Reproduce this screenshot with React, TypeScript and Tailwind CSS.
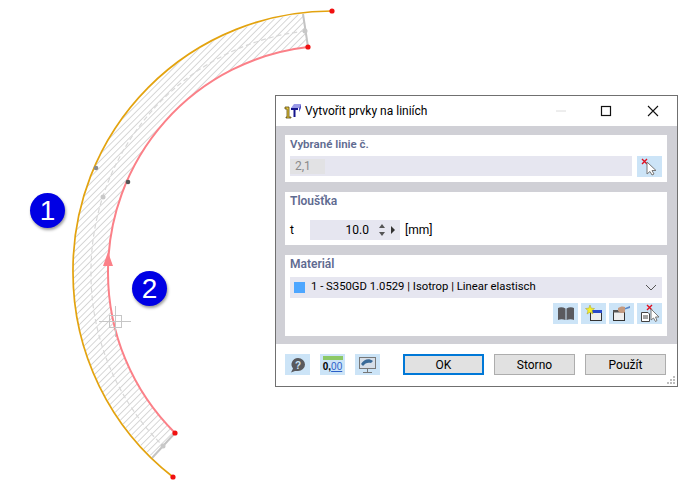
import React from "react";

const outerTop = "M332 11A259 259 0 0 0 73 272";
const outerBottom = "A259 259 0 0 0 173 477";
const inner = "M308 47A226 226 0 0 0 108 272A226 226 0 0 0 175 433";
const hatchArea =
  "M303 14A258.5 258.5 0 0 0 73 272A259 259 0 0 0 152 457L175 433A226 226 0 0 1 108 272A226 226 0 0 1 308 47Z";

function Curves() {
  return (
    <svg className="absolute inset-0" width={699} height={497} viewBox="0 0 699 497">
      <defs>
        <pattern id="hatch" width="4.6" height="4.6" patternUnits="userSpaceOnUse" patternTransform="rotate(45)">
          <line x1="0" y1="0" x2="0" y2="4.6" stroke="#9c9c9c" strokeWidth="0.8" />
        </pattern>
      </defs>
      <path d={hatchArea} fill="url(#hatch)" />
      <path d="M305 31A242 242 0 0 0 91 272A242 242 0 0 0 163 446" fill="none" stroke="#d8d8d8" strokeWidth="1.2" strokeDasharray="5 3" />
      <line x1="303" y1="14" x2="308" y2="47" stroke="#c4c4c4" strokeWidth="2" />
      <line x1="152" y1="458" x2="175" y2="433" stroke="#c4c4c4" strokeWidth="2" />
      <circle cx="305" cy="31" r="2.5" fill="#c8c8c8" />
      <circle cx="163" cy="446" r="2.5" fill="#c8c8c8" />
      <circle cx="103" cy="197" r="2.5" fill="#c8c8c8" />
      <path d={outerTop + outerBottom} fill="none" stroke="#e3a30f" strokeWidth="1.7" />
      <path d={inner} fill="none" stroke="#fb8088" strokeWidth="2" />
      <path d="M108 252L103 266L113 266Z" fill="#fb8088" />
      <circle cx="96" cy="168" r="2.3" fill="#8c8c8c" />
      <circle cx="128" cy="182" r="2.3" fill="#555" />
      <circle cx="332" cy="11" r="2.6" fill="#f01010" />
      <circle cx="308" cy="47" r="2.6" fill="#f01010" />
      <circle cx="175" cy="433" r="2.6" fill="#f01010" />
      <circle cx="173" cy="477" r="2.6" fill="#f01010" />
      <g stroke="#c6c6c6" strokeWidth="1" fill="none">
        <rect x="109.5" y="315.5" width="12" height="12" />
        <path d="M99 321.5H131M115.5 306V337" />
      </g>
    </svg>
  );
}

function Badge({ n, className }: { n: string; className: string }) {
  return (
    <div className={`absolute w-[35px] h-[35px] rounded-full bg-[#0000e4] text-white flex items-center justify-center text-[28px] font-['Liberation_Sans',sans-serif] shadow-[1px_2px_3px_rgba(0,0,0,0.4)] ${className}`}>
      {n}
    </div>
  );
}

function Tile({ children, className = "" }: { children: React.ReactNode; className?: string }) {
  return <div className={`w-[25px] h-[21px] bg-[#cce4f7] flex items-center justify-center ${className}`}>{children}</div>;
}

const Pick = () => (
  <svg width="21" height="19" viewBox="0 0 21 19">
    <path d="M3 2L8 7M8 2L3 7" stroke="#e01020" strokeWidth="1.4" />
    <path d="M8 5V17L11 14.5L13 18L15 17L13 13.5H17Z" fill="#fff" stroke="#777" strokeWidth="1" />
  </svg>
);

const Sel = "font-semibold text-[#5f6b91] leading-[16px]";
const Btn = "w-[81px] h-[21px] flex items-center justify-center text-[12px] bg-[#e1e1e1] text-black";

export default function App() {
  return (
    <div className="relative w-[699px] h-[497px] bg-white overflow-hidden font-['Roboto',sans-serif]">
      <Curves />
      <Badge n="1" className="left-[30px] top-[193px]" />
      <Badge n="2" className="left-[132px] top-[271px]" />

      <div className="absolute left-[275px] top-[95px] w-[403px] h-[292px] border border-[#707070] bg-white flex flex-col">
        <div className="h-[30px] flex items-center shrink-0">
          <svg width="18" height="16" viewBox="0 0 18 16" className="ml-[8px]">
            <path d="M1 4H5V14H7V15H2V14H3V6H1Z" fill="#e8c83c" stroke="#5a4a10" strokeWidth="0.8" />
            <path d="M7 5H15L17 1H10L7 5Z" fill="#9a9ae8" />
            <path d="M15 5L17 1V5L15 9Z" fill="#5050c0" />
            <path d="M7 5H14V7H11.5V14H9.5V7H7Z" fill="#14148c" />
          </svg>
          <span className="ml-[3px] text-[12px] text-black">Vytvořit prvky na liniích</span>
          <div className="ml-auto flex items-center">
            <svg width="12" height="14" viewBox="0 0 12 14" className="mr-[33px]"><path d="M1 7H11" stroke="#dcdcdc" /></svg>
            <svg width="12" height="12" viewBox="0 0 12 12" className="mr-[35px]"><rect x="1.5" y="1.5" width="9" height="9" fill="none" stroke="#111" strokeWidth="1.2" /></svg>
            <svg width="12" height="12" viewBox="0 0 12 12" className="mr-[18px]"><path d="M1 1L11 11M11 1L1 11" stroke="#111" strokeWidth="1.1" /></svg>
          </div>
        </div>

        <div className="h-[218px] shrink-0 bg-[#d0d0d6] pt-[9px] px-[9px] flex flex-col gap-[10px]">
          <div className="w-[382px] h-[47px] bg-white px-[5px] pt-[1px]">
            <div className={`${Sel} text-[11.5px]`}>Vybrané linie č.</div>
            <div className="mt-[4px] flex gap-[5px]">
              <div className="w-[342px] h-[20px] bg-[#e6e6f0] flex items-center">
                <span className="pl-[5px] pr-[14px] h-[15px] flex items-center text-[12px] text-[#8a8a8a] bg-[#e2e2e4]">2,1</span>
              </div>
              <Tile><Pick /></Tile>
            </div>
          </div>

          <div className="w-[382px] h-[53px] bg-white px-[5px] pt-[1px]">
            <div className={`${Sel} text-[12px]`}>Tloušťka</div>
            <div className="mt-[11px] flex items-center">
              <span className="w-[20px] text-[12px] text-black">t</span>
              <div className="w-[90px] h-[20px] bg-[#e6e6f0] flex items-center justify-end text-[12px] text-black">
                <span>10.0</span>
                <svg width="10" height="14" viewBox="0 0 10 14" className="ml-[8px]"><path d="M5 1L8 5H2ZM5 13L8 9H2Z" fill="#555" /></svg>
                <svg width="6" height="8" viewBox="0 0 6 8" className="ml-[3px] mr-[4px]"><path d="M1 0L5 4L1 8Z" fill="#333" /></svg>
              </div>
              <span className="ml-[5px] text-[12px] text-black">[mm]</span>
            </div>
          </div>

          <div className="w-[382px] h-[81px] bg-white px-[5px] pt-[1px]">
            <div className={`${Sel} text-[12px]`}>Materiál</div>
            <div className="mt-[5px] h-[21px] bg-[#e6e6f0] flex items-center text-[11.3px] text-black">
              <span className="ml-[4px] w-[11px] h-[11px] bg-[#4da6ff]" />
              <span className="ml-[6px]">1 - S350GD 1.0529 | Isotrop | Linear elastisch</span>
              <svg width="12" height="8" viewBox="0 0 12 8" className="ml-auto mr-[5px]"><path d="M1 1L6 6L11 1" fill="none" stroke="#555" strokeWidth="1" /></svg>
            </div>
            <div className="mt-[5px] flex justify-end gap-[3px]">
              <Tile>
                <svg width="18" height="15" viewBox="0 0 18 15"><path d="M1 2C3 1 6 1 8.5 2.5V14C6 13 3 13 1 14ZM17 2C15 1 12 1 9.5 2.5V14C12 13 15 13 17 14Z" fill="#5a5a5e" /></svg>
              </Tile>
              <Tile>
                <svg width="18" height="17" viewBox="0 0 18 17">
                  <rect x="5.5" y="5.5" width="11" height="10" fill="#eee" stroke="#333" />
                  <rect x="5" y="5" width="12" height="3" fill="#2848c8" />
                  <path d="M5 0L6.2 3.2L9.5 3.5L7 5.6L8 9L5 7.2L2 9L3 5.6L0.5 3.5L3.8 3.2Z" fill="#f4f028" stroke="#b0a020" strokeWidth="0.5" />
                </svg>
              </Tile>
              <Tile>
                <svg width="19" height="17" viewBox="0 0 19 17">
                  <rect x="1.5" y="5.5" width="11" height="10" fill="#eee" stroke="#333" />
                  <rect x="1" y="5" width="12" height="2.5" fill="#555" />
                  <path d="M6 3C8 1.5 11 1 13 2V7C11 9 8 8 6 6Z" fill="#c49a80" />
                  <path d="M13 3L18 1V3L13 4.5Z" fill="#5a88c8" />
                </svg>
              </Tile>
              <Tile>
                <svg width="21" height="19" viewBox="0 0 21 19">
                  <path d="M2.5 8.5H9L10.5 10V17.5H2.5Z" fill="#fff" stroke="#444" />
                  <path d="M4 12H9M4 14H9" stroke="#444" />
                  <path d="M8 1L13 6M13 1L8 6" stroke="#e01020" strokeWidth="1.4" />
                  <path d="M12 5V16L14.5 14L16.5 17.5L18 16.5L16.5 13H20Z" fill="#fff" stroke="#777" />
                </svg>
              </Tile>
            </div>
          </div>
        </div>

        <div className="flex-1 relative flex items-start pt-[10px] pl-[9px]">
          <Tile>
            <svg width="17" height="16" viewBox="0 0 17 16">
              <path d="M9 1A7 6.5 0 0 1 9 14H6L2 15.5L4 11.5A7 6.5 0 0 1 9 1Z" fill="#59595d" />
              <text x="9" y="11.5" textAnchor="middle" fontSize="10" fontWeight="700" fill="#cce4f7" fontFamily="Liberation Sans">?</text>
            </svg>
          </Tile>
          <Tile className="ml-[10px] flex-col">
            <span className="w-[20px] h-[4px] bg-[#8cc866] mb-[1px]" />
            <span className="text-[10px] leading-[12px] font-bold text-black font-['Liberation_Sans',sans-serif]">0,<span className="text-[#2a5fc8] underline font-normal">00</span></span>
          </Tile>
          <Tile className="ml-[10px]">
            <svg width="19" height="18" viewBox="0 0 19 18">
              <rect x="1.5" y="1.5" width="16" height="11" fill="#d6dee8" stroke="#777" />
              <path d="M3 8C6 3 11 2 15 5L13 7C10 6 7 7 5 10Z" fill="#3a6a98" />
              <path d="M9.5 13V16M5 16.5H14" stroke="#777" />
            </svg>
          </Tile>
          <button className={`${Btn} ml-[23px] border-2 border-[#0078d7]`}>OK</button>
          <button className={`${Btn} ml-[10px] border border-[#adadad]`}>Storno</button>
          <button className={`${Btn} ml-[10px] border border-[#adadad]`}>Použít</button>
          <svg width="10" height="10" viewBox="0 0 10 10" className="absolute right-[1px] bottom-[1px]">
            <path d="M7 1h2v2H7zM4 4h2v2H4zM7 4h2v2H7zM1 7h2v2H1zM4 7h2v2H4zM7 7h2v2H7z" fill="#bdbdbd" />
          </svg>
        </div>
      </div>
    </div>
  );
}
